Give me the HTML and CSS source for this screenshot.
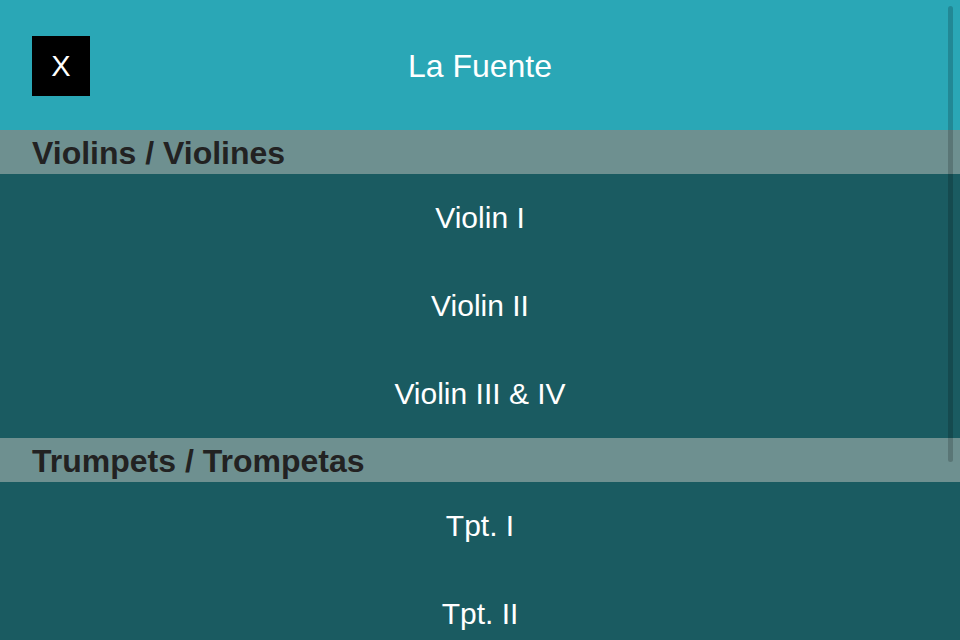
FILE: index.html
```html
<!DOCTYPE html>
<html lang="en">
<head>
<meta charset="UTF-8">
<meta name="viewport" content="width=device-width, initial-scale=1">
<title>La Fuente</title>
<link rel="stylesheet" href="styles.css">
</head>
<body>

<div class="screen">
  <!-- Header -->
  <header class="topbar">
    <button class="close-btn" type="button">X</button>
    <h1>La Fuente</h1>
  </header>

  <!-- Parts list -->
  <div class="list">
    <div class="section">Violins / Violines</div>
    <div class="row">Violin I</div>
    <div class="row">Violin II</div>
    <div class="row">Violin III &amp; IV</div>

    <div class="section">Trumpets / Trompetas</div>
    <div class="row">Tpt. I</div>
    <div class="row">Tpt. II</div>
  </div>

  <div class="scrollbar"></div>
</div>

</body>
</html>
```

FILE: styles.css
```css
body {
  margin: 0;
  font-family: "Liberation Sans", Arial, sans-serif;
  background: #1a5b61;
}

.screen {
  position: relative;
  width: 960px;
  height: 640px;
  overflow: hidden;
}

.topbar {
  height: 130px;
  background: #2aa7b6;
  display: flex;
  align-items: center;
  justify-content: center;
  position: relative;
}

.topbar h1 {
  margin: 0;
  font-size: 32px;
  font-weight: normal;
  color: #fff;
  padding-top: 2px;
}

.close-btn {
  position: absolute;
  left: 32px;
  top: 36px;
  width: 58px;
  height: 60px;
  background: #000;
  color: #fff;
  border: none;
  font-family: inherit;
  font-size: 29px;
  padding: 0;
}

.section {
  height: 44px;
  background: #6e9090;
  color: #222;
  font-size: 32px;
  font-weight: bold;
  padding-left: 32px;
  padding-top: 2px;
  box-sizing: border-box;
  display: flex;
  align-items: center;
}

.row {
  height: 88px;
  background: #1a5b61;
  color: #fff;
  font-size: 30px;
  display: flex;
  align-items: center;
  justify-content: center;
}

.scrollbar {
  position: absolute;
  right: 7px;
  top: 6px;
  width: 5px;
  height: 456px;
  border-radius: 3px;
  background: rgba(0, 0, 0, 0.18);
}
```
